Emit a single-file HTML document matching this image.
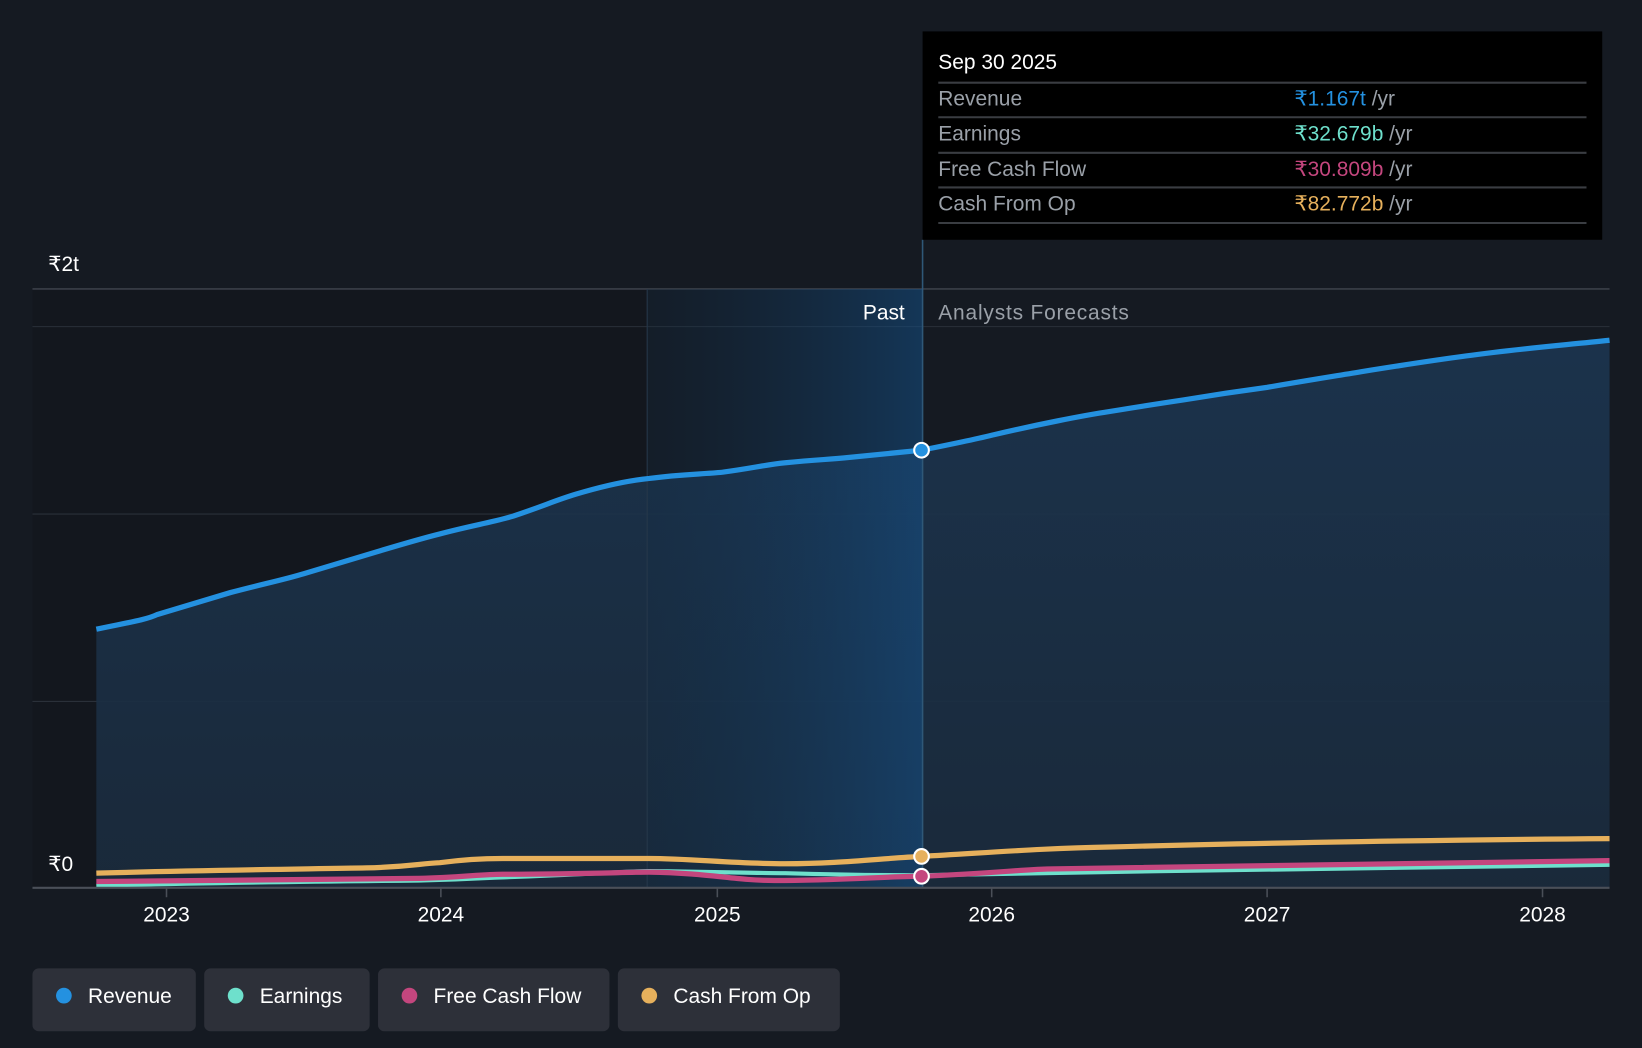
<!DOCTYPE html>
<html><head><meta charset="utf-8"><style>
html,body{margin:0;padding:0;background:#151a22;overflow:hidden}
svg{display:block}
text{font-family:"Liberation Sans",sans-serif}
</style></head><body>
<svg width="1642" height="1048" viewBox="0 0 1568 1001" preserveAspectRatio="none" xmlns="http://www.w3.org/2000/svg">
<defs>
<linearGradient id="pastband" x1="0" x2="1" y1="0" y2="0">
<stop offset="0" stop-color="#0f2a42" stop-opacity="0.3"/><stop offset="1" stop-color="#145088" stop-opacity="0.75"/>
</linearGradient>
<linearGradient id="areaF" x1="0" x2="0" y1="0" y2="1">
<stop offset="0" stop-color="#1c3550"/><stop offset="1" stop-color="#1a2b3d"/>
</linearGradient>
</defs>
<rect width="1568" height="1001" fill="#151a22"/>
<rect x="31" y="276" width="587" height="572" fill="#13171e"/>
<line x1="31" y1="276" x2="1537" y2="276" stroke="#3a3f48" stroke-width="1.5"/>
<line x1="31" y1="312" x2="1537" y2="312" stroke="#2a3039" stroke-width="1"/>
<line x1="31" y1="491" x2="1537" y2="491" stroke="#2a3039" stroke-width="1"/>
<line x1="31" y1="670" x2="1537" y2="670" stroke="#2a3039" stroke-width="1"/>
<path d="M92,601 C120,595 140,592 150,587 C180,578 200,572 220,566 C250,558 270,554 290,548 C320,539 340,533 360,527 C390,518 400,515 420,510 C450,502 470,499 490,493 C520,483 530,478 550,472 C580,463 600,459 620,457 C650,453 670,453 690,451 C720,447 730,444 750,442 C780,439 790,439 810,437 C840,434 860,432 880,430 C910,424 930,420 950,415 C980,408 990,406 1010,402 C1030,398 1040,396 1060,393 C1090,388 1110,385 1130,382 C1160,377 1180,374 1210,370 C1250,363 1270,360 1300,355 C1350,347 1370,344 1400,340 C1450,333 1490,330 1537,325 L1537,848 L92,848 Z" fill="url(#areaF)" opacity="0.9"/>
<rect x="618" y="276" width="263" height="572" fill="url(#pastband)" opacity="0.7"/>
<line x1="618" y1="276" x2="618" y2="848" stroke="#26384a" stroke-width="1"/>
<line x1="881" y1="229" x2="881" y2="848" stroke="#2f5878" stroke-width="1.5"/>
<path d="M92,601 C120,595 140,592 150,587 C180,578 200,572 220,566 C250,558 270,554 290,548 C320,539 340,533 360,527 C390,518 400,515 420,510 C450,502 470,499 490,493 C520,483 530,478 550,472 C580,463 600,459 620,457 C650,453 670,453 690,451 C720,447 730,444 750,442 C780,439 790,439 810,437 C840,434 860,432 880,430 C910,424 930,420 950,415 C980,408 990,406 1010,402 C1030,398 1040,396 1060,393 C1090,388 1110,385 1130,382 C1160,377 1180,374 1210,370 C1250,363 1270,360 1300,355 C1350,347 1370,344 1400,340 C1450,333 1490,330 1537,325" fill="none" stroke="#2491e0" stroke-width="5"/>
<path d="M92,846 C200,843 300,842 400,841 C450,840 470,838 480,838 C550,836 600,832 620,832 C700,833 720,834 750,834 C820,836 850,836 880,836 C1100,832 1300,829 1537,826" fill="none" stroke="#6ee0cc" stroke-width="4"/>
<path d="M92,842 C200,840 300,840 400,839 C440,838 460,835 480,835 C550,835 600,833 620,833 C680,834 700,841 740,841 C800,841 850,837 880,837 C950,834 970,831 1000,830 C1200,826 1400,823 1537,822" fill="none" stroke="#c4467e" stroke-width="5"/>
<path d="M92,834 C200,831 300,830 350,829 C390,828 400,825 420,824 C450,820 470,820 480,820 C550,820 600,820 620,820 C660,820 700,825 750,825 C800,825 840,820 880,818 C950,814 1000,810 1060,809 C1200,805 1400,802 1537,801" fill="none" stroke="#e6b05c" stroke-width="5"/>
<circle cx="880" cy="430" r="7" fill="#2491e0" stroke="#fff" stroke-width="2"/>
<circle cx="880" cy="818" r="7" fill="#e6b05c" stroke="#fff" stroke-width="2"/>
<circle cx="880" cy="837" r="7" fill="#c4467e" stroke="#fff" stroke-width="2"/>
<line x1="31" y1="848" x2="1537" y2="848" stroke="#4a4f58" stroke-width="2"/>
<g stroke="#4a4f58" stroke-width="1.5">
<line x1="159" y1="848" x2="159" y2="857"/><line x1="421" y1="848" x2="421" y2="857"/><line x1="685" y1="848" x2="685" y2="857"/><line x1="947" y1="848" x2="947" y2="857"/><line x1="1210" y1="848" x2="1210" y2="857"/><line x1="1473" y1="848" x2="1473" y2="857"/>
</g>
<g fill="#fff" font-size="20" text-anchor="middle">
<text x="159" y="880">2023</text><text x="421" y="880">2024</text><text x="685" y="880">2025</text><text x="947" y="880">2026</text><text x="1210" y="880">2027</text><text x="1473" y="880">2028</text>
</g>
<text x="46" y="259" fill="#fff" font-size="20">₹2t</text>
<text x="46" y="832" fill="#fff" font-size="20">₹0</text>
<text x="864" y="305" fill="#fff" font-size="20" text-anchor="end">Past</text>
<text x="896" y="305" fill="#9aa0a8" font-size="20" textLength="182">Analysts Forecasts</text>
<rect x="881" y="30" width="649" height="199" fill="#000"/>
<text x="896" y="66" fill="#fff" font-size="20">Sep 30 2025</text>
<g stroke="#3a3d42" stroke-width="2">
<line x1="896" y1="79" x2="1515" y2="79"/><line x1="896" y1="112" x2="1515" y2="112"/><line x1="896" y1="146" x2="1515" y2="146"/><line x1="896" y1="179" x2="1515" y2="179"/><line x1="896" y1="213" x2="1515" y2="213"/>
</g>
<g font-size="20" fill="#9aa0a8">
<text x="896" y="101">Revenue</text><text x="896" y="134">Earnings</text><text x="896" y="168">Free Cash Flow</text><text x="896" y="201">Cash From Op</text>
</g>
<g font-size="20">
<text x="1236" y="101"><tspan fill="#2491e0">₹1.167t</tspan><tspan fill="#9aa0a8"> /yr</tspan></text>
<text x="1236" y="134"><tspan fill="#6ee0cc">₹32.679b</tspan><tspan fill="#9aa0a8"> /yr</tspan></text>
<text x="1236" y="168"><tspan fill="#c4467e">₹30.809b</tspan><tspan fill="#9aa0a8"> /yr</tspan></text>
<text x="1236" y="201"><tspan fill="#e6b05c">₹82.772b</tspan><tspan fill="#9aa0a8"> /yr</tspan></text>
</g>
<g fill="#2d3039">
<rect x="31" y="925" width="156" height="60" rx="6"/><rect x="195" y="925" width="158" height="60" rx="6"/><rect x="361" y="925" width="221" height="60" rx="6"/><rect x="590" y="925" width="212" height="60" rx="6"/>
</g>
<circle cx="61" cy="951" r="7.5" fill="#2491e0"/><circle cx="225" cy="951" r="7.5" fill="#6ee0cc"/><circle cx="391" cy="951" r="7.5" fill="#c4467e"/><circle cx="620" cy="951" r="7.5" fill="#e6b05c"/>
<g fill="#fff" font-size="20">
<text x="84" y="958">Revenue</text><text x="248" y="958">Earnings</text><text x="414" y="958">Free Cash Flow</text><text x="643" y="958">Cash From Op</text>
</g>
</svg>
</body></html>
